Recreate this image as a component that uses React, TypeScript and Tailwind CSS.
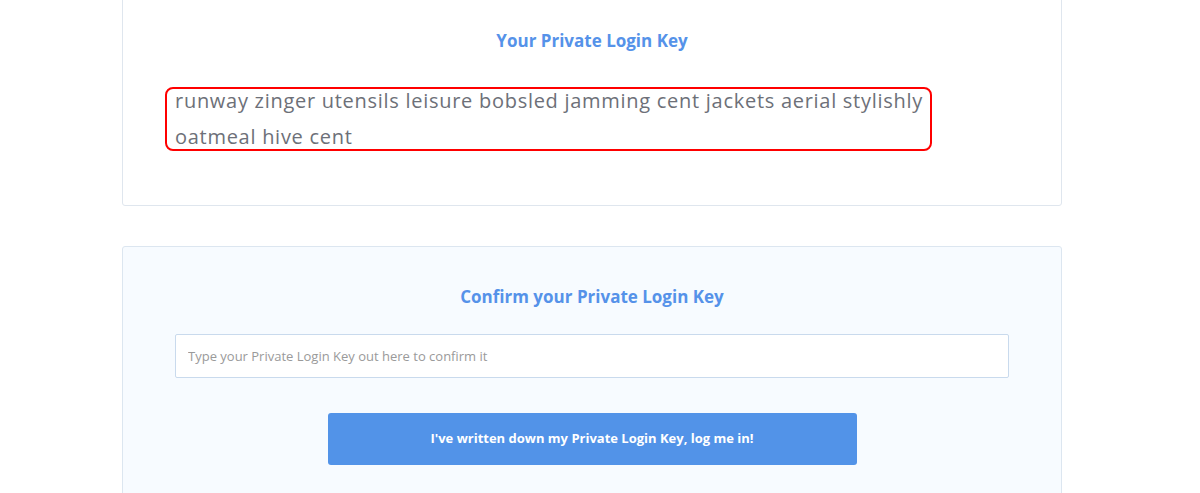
export default function App() {
  return (
    <div className="min-h-[493px] w-full bg-white font-['Open_Sans',_'Lato',_sans-serif]">
      <div className="ml-[122px] w-[940px]">
        <section className="-mt-px h-[207px] rounded-b-[3px] border border-[#dfe6ee] bg-white px-[42px] pt-[30px]">
          <h2 className="text-center text-[17px] font-bold leading-[22px] text-[#5592e9]">
            Your Private Login Key
          </h2>
          <div className="mt-[35px] h-[64px] w-[767px] rounded-[8px] border-2 border-[#ff0000] pl-[8px]">
            <p className="-mt-[6px] text-[20px] leading-[36px] tracking-[0.72px] text-[#6d7078]">
              runway zinger utensils leisure bobsled jamming cent jackets aerial stylishly oatmeal hive cent
            </p>
          </div>
        </section>

        <section className="mt-[40px] h-[260px] rounded-t-[3px] border border-[#dce6f0] bg-[#f7fbff] px-[52px] pt-[39px]">
          <h2 className="text-center text-[17px] font-bold leading-[22px] text-[#5592e9]">
            Confirm your Private Login Key
          </h2>
          <input
            type="text"
            placeholder="Type your Private Login Key out here to confirm it"
            className="mt-[26px] h-[44px] w-[834px] rounded-[2px] border border-[#c9daed] bg-white px-[12px] text-[13px] text-[#555] outline-none placeholder:text-[#9a9a9a]"
          />
          <div className="mt-[35px] flex justify-center">
            <button className="h-[52px] w-[529px] rounded-[3px] bg-[#5293e8] text-[13px] font-bold text-white">
              I've written down my Private Login Key, log me in!
            </button>
          </div>
        </section>
      </div>
    </div>
  );
}
